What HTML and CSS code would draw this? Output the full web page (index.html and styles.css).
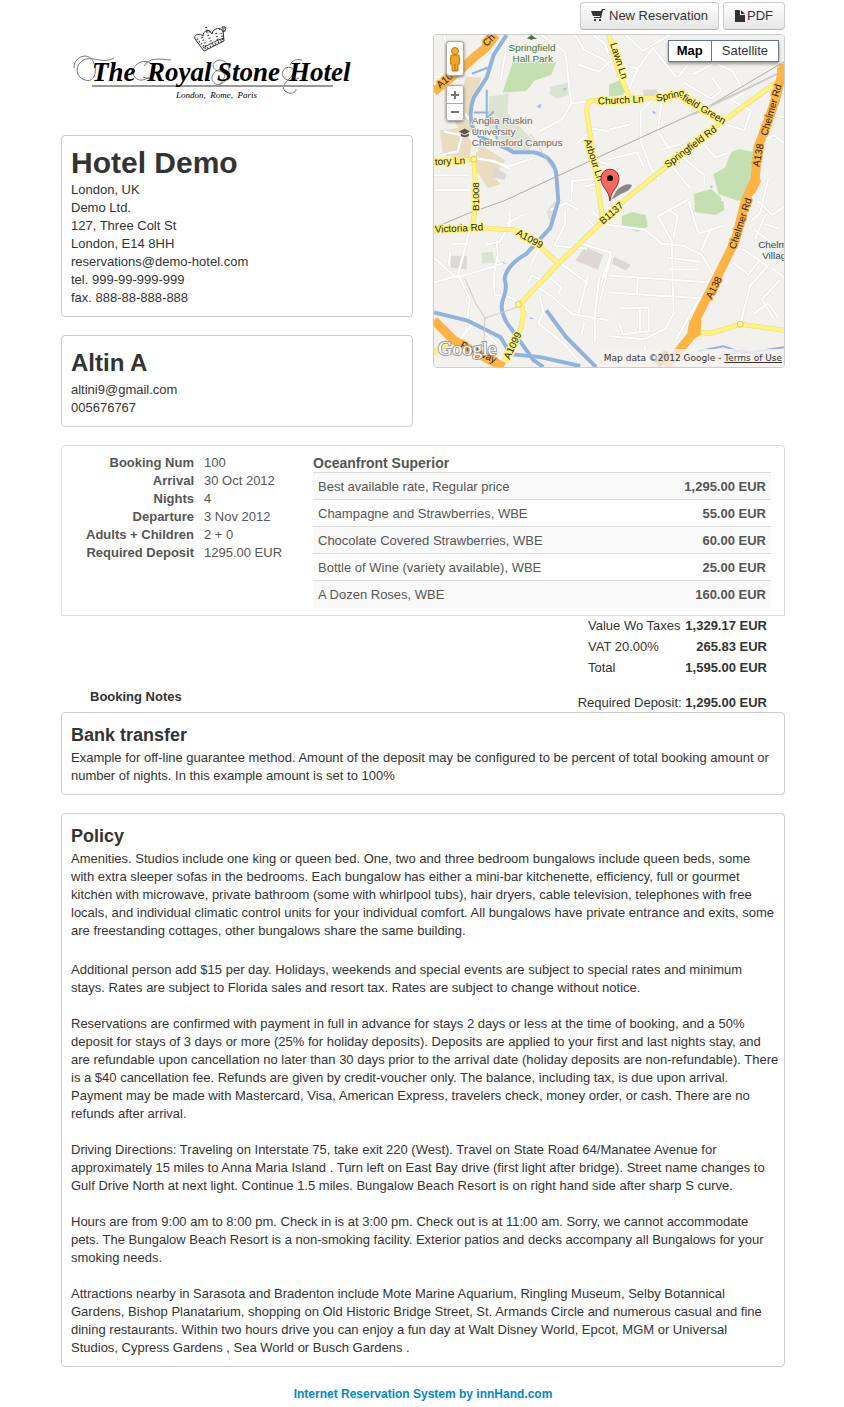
FILE: index.html
```html
<!DOCTYPE html>
<html lang="en">
<head>
<meta charset="utf-8">
<meta name="viewport" content="width=device-width, initial-scale=1">
<title>Hotel Demo - Booking 100</title>
<link rel="stylesheet" href="styles.css">
</head>
<body>
<div class="page">
  <div class="top">
    <div class="col">
      <header class="brand">
        <svg class="logo" viewBox="0 0 300 95" role="img" aria-label="The RoyalStone Hotel - London, Rome, Paris">
          <g fill="none" stroke="#333" stroke-width="1">
            <path d="M134 24l9 12 20-10-1-12M134 24c-2-5 5-6 8-3 0-6 7-7 9-2 1-7 10-7 11-2 4-3 4-6-1-5M146 18c-2-3 4-4 3 0M142 33c6-4 15-8 21-10"/>
            <path stroke-width="2" stroke-dasharray="1 2" d="M136 24l9 10 17-9-2-8M141 22l4 9M147 20l4 9M155 18l2 8M145 12l2 6M158 14l5-2 1 5"/>
          </g>
          <g fill="none" stroke="#777" stroke-width="1">
            <path d="M13 53C13 41 27 37 32 46C38 58 32 68 24 65C13 62 14 47 25 44C34 42 43 49 53 43"/>
            <path d="M88 62C79 69 71 63 72 55C75 45 90 43 93 53C96 61 90 66 82 62M83 51C88 42 99 44 110 45M157 70C163 68 168 53 160 54C149 57 148 67 157 70C171 67 172 45 158 45C149 47 151 57 160 56"/>
            <path d="M238 63C226 69 219 62 222 56C225 50 234 52 233 57C229 66 218 70 224 76C229 80 235 78 235 74M229 50Q232 43 241 45"/>
          </g>
          <path d="M31 71H272" stroke="#999" stroke-width="2"/>
          <g class="logo-name">
            <text x="31" y="66">The</text>
            <text x="86" y="66">Royal</text>
            <text x="156" y="66">Stone</text>
            <text x="228" y="66">Hotel</text>
          </g>
          <text class="logo-cities" x="115" y="83">London,&#160; Rome,&#160; Paris</text>
        </svg>
      </header>
      <section class="card">
        <h1>Hotel Demo</h1>
        <p>London, UK<br>Demo Ltd.<br>127, Three Colt St<br>London, E14 8HH<br>reservations@demo-hotel.com<br>tel. 999-99-999-999<br>fax. 888-88-888-888</p>
      </section>
      <section class="card">
        <h2>Altin A</h2>
        <p>altini9@gmail.com<br>005676767</p>
      </section>
    </div>
    <div class="col">
      <div class="actions">
        <button class="btn" type="button"><svg width="14" height="14" viewBox="0 0 14 14" fill="#333"><path d="M11 0h3v1h-2l-2 8H3V8h6V7H2L0 2h10zM3 10h2v2H3zM8 10h2v2H8z"/></svg>New Reservation</button>
        <button class="btn btn-pdf" type="button"><svg width="10" height="12" viewBox="0 0 10 12" fill="#333"><path d="M0 0h5v5h5v7H0zM6 0l4 4H6z"/></svg>PDF</button>
      </div>
      <div class="map">
        <svg class="map-canvas" viewBox="0 0 352 334" preserveAspectRatio="xMidYMid slice" role="img" aria-label="Map of Springfield Road">
          <rect width="352" height="334" fill="#f3f1ee"/>
          <g fill="#c5dfb0">
            <path d="M80 25L123 27 118 40 101 46 93 56 69 58zM176 50l14-6 5 16-19 2z"/>
            <path d="M300 117l8-2 15 3 4 14-8 29-13 6-20-7-5-20 12-7 4-11zM261 160l18-5 10 9-1 14-24 0z"/>
            <path d="M262 167h29l1 9-9 5-21-3zM189 182l10-4 14 3 2 12-10 5-16-5z"/>
          </g>
          <g fill="#dbe4d3">
            <path d="M55 62l20-3-1 20 28 30-9 9-25-5-13-18zM117 52l18-4 1 12-12 4-8-4z"/>
            <path d="M48 219l11-1 2 11-13 1zM113 178l8-11 5 5-9 16z"/>
          </g>
          <path fill="#e9dcc0" d="M32 42l16 1-12 30 2 23-9 7-8-16zM6 96l21-3 11 15-2 17-27-4zM44 109l28 17-12 17 7 7-13 4-14-21z"/>
          <g fill="#ddd8d3"><path d="M17 222h16v14l-16-2zM152 213l18 8-5 15-23-9zM181 223l17 8-5 6-14-7zM210 55h14l3 8h-15zM61 133l12 7-2 6-12-3z"/></g>
          <defs>
            <path id="minor" d="M0 50L25 33M10 0l6 24 25 1M18 41L0 42M31 79l12 16 0 23M0 141h35M0 156h36M55 126l20 6 25-8M10 97l18 4-4 16-18 4M41 124l20 3 15 8M72 0v18l-5 27M132 17l6 52 15-2M138 69l-9 16-23 12M132 17l-24-17M142 0l9 15 20 10 5 7M176 28l-10 9-20-7M160 0l12 9 4 12M176 12l11 17 18 5 15-21 24 30M193 0l17 16 27-16M205 34l-9 20-8 11M220 65l-12 12 0 30 10 27 8 11M229 67l-4 30 12 18M176 95l21-5M176 125l28-7 7 15M246 42l22-28 18-4M251 48l28 16 10-8-9-12M260 40l22-12 18 8 12 22-14 8M269 107l14 16 12-4M300 66l19 10-7 20-18-6M332 105l10-4 10 8M340 80l12 3M336 145l-8 34-9 8M230 115l18-5 5 9-12 14M249 122l23 19 0 9M238 131l20 23M143 110l17-16 16 3M154 125l22 5M160 145l-21 2-1 20M150 153l20-5M0 224l22 20 15-4 35-11M0 249l24-7 12-46M16 218l-1 14M18 210h16M63 206l1 16-4 20 1 19 16 3 8 5M52 211l14-3 10-17V176M73 190l16-9M24 240l12 26-4 31-11 19M42 286l-17 23M44 292l20 19M106 214l-9 18M128 230l27 20M116 244l12 10-3 6M94 250l4-8 9 4-4 7 17 11 19 17 37 6M106 262l4 16-5 12 25 20 14 16M155 242l-11 43M166 244l-5 45M151 290l-3 13M162 288v21M117 176l16-7 12 7M142 208l36 11-10 32M178 222l-11 46M158 176l12 12M132 176v14l-11 22 33 3M154 185l10 10M176 191l36 5 17 14 22 2 18 9 12 20M225 182l14 25 2 73-8 15-21 11-36-3M226 182l30-17M241 204l4-22-10-7M256 167l10 33 24-8M279 194l-10 22M236 224l31 4M236 236h30M176 242l103 7M176 259l96 6M188 275l28-1v24l-26 3-4-12M207 276v22M205 245l-1 15M267 265l-24 42M338 230l-20 22-10 39M301 229l15 12 12-15M322 196l16 12-5 18M339 234l13 10M310 215l25 17M347 195l-14-5M348 246l-18 20 12 20M322 280l14-10 10 14M212 312v12M326 167l14 14 12-8M333 181l-10 24"/>
            <path id="yellow" d="M348 45L289 88 193 165 167 190 125 230 88 269 90 282 87 296 70 330M170 187L167 167 155 87Q151 65 160 66L176 67 209 63 236 64Q252 54 263 72L289 88M176 0L185 35 196 62M0 197L43 194 80 196 97 204 125 230M0 128L40 125 43 167 38 195M263 299L278 300 308 291 352 297M0 320L18 305"/>
            <path id="orange" d="M0 57L30 32 43 20Q53 14 62 0M0 287L20 307 43 320 70 334M352 30L343 67 326 113 323 145 313 167 303 207 283 247 263 287 259 302 233 334"/>
          </defs>
          <use href="#minor" class="minor-edge"/><use href="#minor" class="minor-road"/>
          <g fill="none" stroke="#8fb3dd" stroke-width="4" stroke-linejoin="round">
            <path d="M73 0L60 20 53 43 40 63Q35 76 38 90Q41 99 47 103L73 114 80 118 100 118Q120 122 123 140L125 167 117 194 93 220Q72 232 71 246Q74 254 70 264Q65 275 73 289L100 327 110 334"/>
            <path d="M0 279l33 8 34 17 10 17 30 3 40 9"/>
            <path d="M113 277l20 27 30 30"/>
            <path stroke-width="2" d="M38 39l16-6M40 78h15M53 55v29l7-7M63 105v-15M266 318l25-5 20 7 41-6M280 326l30-9 42 12"/>
          </g>
          <path fill="#9dc0ea" d="M103 72l5-3-1 5zM129 54l4-1-1 3zM220 76l4 3-4 0zM278 151l3 2-3 1zM69 228l4 2-3 0zM96 284l5 1-4 1z"/>
          <g fill="none" stroke="#aaa" stroke-width="1">
            <path d="M0 194L33 180 70 167 176 118 276 72 352 27"/>
            <path stroke="#ccc" stroke-width="2" d="M260 80L352 36"/>
            <path stroke="#cfcbc4" d="M31 245l11 25 9 14-1 34M51 285l32-11M97 100l22 34"/>
          </g>
          <use href="#yellow" class="yellow-edge"/><use href="#yellow" class="yellow-road"/>
          <circle cx="308" cy="291" r="3" fill="#fff8a0" stroke="#ddc74c"/><circle cx="85" cy="271" r="3" fill="#fff8a0" stroke="#ddc74c"/><circle cx="40" cy="125" r="3" fill="#fff8a0" stroke="#ddc74c"/>
          <use href="#orange" class="orange-edge"/><use href="#orange" class="orange-road"/>
          <path fill="#ffb340" d="M345 33l7-5v20l-7-4zM322 140l7 7-6 12-10 8-4-4 10-9zM257 287h12l-1 15-11 6-3-5z"/>
          <g class="road-labels">
            <text transform="translate(177 9) rotate(72)">Lawn Ln</text>
            <text transform="translate(165 70) rotate(-3)">Church Ln</text>
            <text transform="translate(224 67) rotate(-12)">Spring</text>
            <text transform="translate(249 65) rotate(31)">field Green</text>
            <text transform="translate(235 134) rotate(-37)">Springfield Rd</text>
            <text transform="translate(151 106) rotate(72)">Arbour Ln</text>
            <text transform="translate(1 131) rotate(-3)">tory Ln</text>
            <text transform="translate(45 177) rotate(-90)">B1008</text>
            <text transform="translate(1 199) rotate(-3)">Victoria Rd</text>
            <text transform="translate(82 201) rotate(29)">A1099</text>
            <text transform="translate(76 327) rotate(-65)">A1099</text>
            <text transform="translate(170 191) rotate(-41)">B1137</text>
          </g>
          <g class="road-labels main-road">
            <text transform="translate(6 54) rotate(-40)">A10</text>
            <text transform="translate(53 12) rotate(-46)">Ch</text>
            <text transform="translate(335 102) rotate(-74)">Chelmer Rd</text>
            <text transform="translate(327 133) rotate(-79)">A138</text>
            <text transform="translate(303 216) rotate(-72)">Chelmer Rd</text>
            <text transform="translate(279 266) rotate(-63)">A138</text>
            <text transform="translate(26 314) rotate(25)">Parkway</text>
            <text transform="translate(226 334) rotate(-45)">138</text>
          </g>
          <g class="place-labels">
            <text x="75" y="16">Springfield</text><text x="79" y="27">Hall Park</text>
            <g class="campus"><text x="38" y="90">Anglia Ruskin</text><text x="38" y="101">University</text><text x="38" y="112">Chelmsford Campus</text></g>
            <g class="village"><text x="326" y="214">Chelm</text><text x="330" y="225">Villag</text></g>
          </g>
          <path fill="#49733f" d="M98 0l4 3H94zM94 3h9v1h-4v1h-2V4h-3z"/>
          <path fill="#5f5548" d="M25 97l6-3 5 3-5 3zM27 99l4 2 4-2v3l-4 1-4-1z"/>
          <path d="M178 166l6-10q9-8 15-5 0 5-11 9z" fill="#333" opacity=".55"/>
          <path d="M177 167c-1-12-9-13-9-23a9 9 0 0 1 18 0c0 10-8 11-9 23z" fill="#f9685e" stroke="#8d302b"/><circle cx="177" cy="144" r="3"/>
          <text class="google" x="4" y="322">Google</text>
        </svg>
        <div class="map-zoom">
          <button class="pegman" type="button" aria-label="Street view"><svg width="10" height="26" viewBox="0 0 10 26"><path d="M1 9h8l1 9H8v7H2v-7H0z" fill="#f5a321" stroke="#bd7410"/><circle cx="5" cy="5" r="3.500" fill="#f7ae2c" stroke="#bd7410"/><path d="M5 18v7" stroke="#bd7410"/></svg></button>
          <div class="zoom-pair"><button type="button" aria-label="Zoom in"><svg width="8" height="8" viewBox="0 0 8 8"><path d="M0 4h8M4 0v8" stroke="#777" stroke-width="2"/></svg></button><button type="button" aria-label="Zoom out"><svg width="8" height="8" viewBox="0 0 8 8"><path d="M0 4h8" stroke="#777" stroke-width="2"/></svg></button></div>
        </div>
        <div class="map-type"><button class="active" type="button">Map</button><button type="button">Satellite</button></div>
        <div class="map-credit">Map data ©2012 Google - <a href="#terms">Terms of Use</a></div>
      </div>
    </div>
  </div>

  <section class="booking">
    <dl>
      <dt>Booking Num</dt><dd>100</dd>
      <dt>Arrival</dt><dd>30 Oct 2012</dd>
      <dt>Nights</dt><dd>4</dd>
      <dt>Departure</dt><dd>3 Nov 2012</dd>
      <dt>Adults + Children</dt><dd>2 + 0</dd>
      <dt>Required Deposit</dt><dd>1295.00 EUR</dd>
    </dl>
    <table class="items">
      <caption>Oceanfront Superior</caption>
      <tbody>
        <tr><td>Best available rate, Regular price</td><td>1,295.00 EUR</td></tr>
        <tr><td>Champagne and Strawberries, WBE</td><td>55.00 EUR</td></tr>
        <tr><td>Chocolate Covered Strawberries, WBE</td><td>60.00 EUR</td></tr>
        <tr><td>Bottle of Wine (variety available), WBE</td><td>25.00 EUR</td></tr>
        <tr><td>A Dozen Roses, WBE</td><td>160.00 EUR</td></tr>
      </tbody>
    </table>
  </section>

  <section class="summary">
    <h4>Booking Notes</h4>
    <div class="sums">
      <table>
        <tbody>
          <tr><td>Value Wo Taxes</td><td>1,329.17 EUR</td></tr>
          <tr><td>VAT 20.00%</td><td>265.83 EUR</td></tr>
          <tr><td>Total</td><td>1,595.00 EUR</td></tr>
        </tbody>
      </table>
      <p>Required Deposit: <strong>1,295.00 EUR</strong></p>
    </div>
  </section>

  <section class="card">
    <h3>Bank transfer</h3>
    <p>Example for off-line guarantee method. Amount of the deposit may be configured to be percent of total booking amount or number of nights. In this example amount is set to 100%</p>
  </section>

  <section class="card policy">
    <h3>Policy</h3>
    <p>Amenities. Studios include one king or queen bed. One, two and three bedroom bungalows include queen beds, some<br>with extra sleeper sofas in the bedrooms. Each bungalow has either a mini-bar kitchenette, efficiency, full or gourmet<br>kitchen with microwave, private bathroom (some with whirlpool tubs), hair dryers, cable television, telephones with free<br>locals, and individual climatic control units for your individual comfort. All bungalows have private entrance and exits, some<br>are freestanding cottages, other bungalows share the same building.</p>
    <p>Additional person add $15 per day. Holidays, weekends and special events are subject to special rates and minimum<br>stays. Rates are subject to Florida sales and resort tax. Rates are subject to change without notice.</p>
    <p>Reservations are confirmed with payment in full in advance for stays 2 days or less at the time of booking, and a 50%<br>deposit for stays of 3 days or more (25% for holiday deposits). Deposits are applied to your first and last nights stay, and<br>are refundable upon cancellation no later than 30 days prior to the arrival date (holiday deposits are non-refundable). There<br>is a $40 cancellation fee. Refunds are given by credit-voucher only. The balance, including tax, is due upon arrival.<br>Payment may be made with Mastercard, Visa, American Express, travelers check, money order, or cash. There are no<br>refunds after arrival.</p>
    <p>Driving Directions: Traveling on Interstate 75, take exit 220 (West). Travel on State Road 64/Manatee Avenue for<br>approximately 15 miles to Anna Maria Island . Turn left on East Bay drive (first light after bridge). Street name changes to<br>Gulf Drive North at next light. Continue 1.5 miles. Bungalow Beach Resort is on right hand side after sharp S curve.</p>
    <p>Hours are from 9:00 am to 8:00 pm. Check in is at 3:00 pm. Check out is at 11:00 am. Sorry, we cannot accommodate<br>pets. The Bungalow Beach Resort is a non-smoking facility. Exterior patios and decks accompany all Bungalows for your<br>smoking needs.</p>
    <p>Attractions nearby in Sarasota and Bradenton include Mote Marine Aquarium, Ringling Museum, Selby Botannical<br>Gardens, Bishop Planatarium, shopping on Old Historic Bridge Street, St. Armands Circle and numerous casual and fine<br>dining restaurants. Within two hours drive you can enjoy a fun day at Walt Disney World, Epcot, MGM or Universal<br>Studios, Cypress Gardens , Sea World or Busch Gardens .</p>
  </section>

  <footer><a href="#innhand">Internet Reservation System by innHand.com</a></footer>
</div>
</body>
</html>
```
FILE: styles.css
```css
* { box-sizing: border-box; }
body {
  margin: 0;
  background: #fff;
  color: #333;
  font: 13px/18px "Liberation Sans", Arial, sans-serif;
}
button { font: inherit; color: inherit; cursor: pointer; }
h1, h2, h3, h4, p, dl, dd { margin: 0; }
.page { max-width: 764px; margin: 0 auto; padding: 2px 19px 0 21px; }

/* Top area */
.top { display: grid; grid-template-columns: 1fr 1fr; gap: 20px; }
.brand { height: 133px; padding-top: 13px; }
.logo { display: block; width: 300px; max-width: 100%; height: 95px; }
.logo-name { font: italic bold 27px "Liberation Serif", serif; fill: #000; }
.logo-cities { font: italic 9px "Liberation Serif", serif; fill: #000; }

.card {
  margin-bottom: 18px;
  padding: 9px;
  border: 1px solid #ccc;
  border-radius: 4px;
}
h1 { font-size: 30px; line-height: 36px; }
h2 { font-size: 24px; line-height: 36px; }
h3 { font-size: 18px; line-height: 27px; }

.actions { display: flex; justify-content: flex-end; gap: 4px; margin-bottom: 4px; }
.btn {
  display: flex;
  align-items: center;
  gap: 4px;
  height: 28px;
  padding: 0 10px;
  border: 1px solid #ccc;
  border-bottom-color: #b3b3b3;
  border-radius: 4px;
  background: linear-gradient(#fff, #e6e6e6);
}
.btn-pdf { gap: 2px; padding: 0 11px; }

/* Map */
.map {
  position: relative;
  height: 334px;
  border: 1px solid #ccc;
  border-radius: 4px;
  overflow: hidden;
}
.map-canvas { display: block; width: 100%; height: 100%; font: 10px "Liberation Sans", Arial, sans-serif; }
.map-canvas use { fill: none; stroke-linejoin: round; }
.minor-edge { stroke: #e2e1df; stroke-width: 3px; }
.minor-road { stroke: #fff; stroke-width: 2px; }
.yellow-edge { stroke: #e4d98c; stroke-width: 5px; }
.yellow-road { stroke: #fff37a; stroke-width: 4px; }
.orange-edge { stroke: #eeb064; stroke-width: 9px; }
.orange-road { stroke: #ffb340; stroke-width: 8px; }
.road-labels text { fill: #222; stroke: #fff37a; stroke-width: 3px; paint-order: stroke; stroke-linejoin: round; }
.main-road text { stroke: #ffb340; }
.place-labels text { fill: #49733f; stroke: #f3f1ee; stroke-width: 2px; paint-order: stroke; }
.place-labels .campus text { fill: #6d6357; }
.place-labels .village text { fill: #444; }
.google { font: 20px "Liberation Serif", serif; fill: #fff; stroke: #999; stroke-width: 2px; paint-order: stroke; }
.map-zoom { position: absolute; top: 6px; left: 12px; width: 18px; }
.map-zoom button { display: grid; place-items: center; width: 100%; height: 17px; padding: 0; border: 0; background: #fff; }
.map-zoom .pegman { height: 35px; border: 1px solid #aaa; border-radius: 3px; box-shadow: 0 1px 3px #777; }
.zoom-pair { margin-top: 9px; border: 1px solid #aaa; border-radius: 3px; box-shadow: 0 1px 3px #777; overflow: hidden; }
.zoom-pair button + button { border-top: 1px solid #aaa; }
.map-type { position: absolute; top: 5px; right: 5px; display: flex; box-shadow: 0 2px 3px #999; }
.map-type button { height: 22px; padding: 0 10px; border: 1px solid #678; background: #fff; }
.map-type .active { padding: 0 8px; border-right: 0; color: #000; font-weight: bold; }
.map-credit {
  position: absolute;
  right: 0;
  bottom: 0;
  padding: 0 2px 0 4px;
  background: rgba(245, 243, 240, .8);
  color: #333;
  font: 9px/18px "DejaVu Sans", sans-serif;
  white-space: nowrap;
}
.map-credit a { color: inherit; }

/* Booking */
.booking {
  display: grid;
  grid-template-columns: 251px 1fr;
  padding: 8px 13px 7px 0;
  border: 1px solid #ddd;
  border-radius: 4px 4px 0 0;
  color: #555;
}
dl { display: grid; grid-template-columns: 132px 1fr; grid-auto-rows: 18px; align-content: start; column-gap: 10px; }
dt { text-align: right; font-weight: bold; }
table { border-collapse: collapse; border-spacing: 0; }
td { padding: 0; }
td:last-child { text-align: right; font-weight: bold; }
.items { width: 100%; }
.items caption { text-align: left; font-size: 14px; font-weight: bold; }
.items td { height: 27px; padding: 1px 5px 0; border-top: 1px solid #ddd; }
.items tr:nth-child(odd) { background: #f9f9f9; }

.summary { display: flex; justify-content: space-between; align-items: flex-end; padding: 0 18px 0 29px; }
.summary h4 { padding-bottom: 6px; font-size: 13px; line-height: 18px; }
.sums table { width: 179px; margin-left: auto; }
.sums td { height: 21px; white-space: nowrap; }
.sums p { padding-top: 15px; text-align: right; }

.policy { padding-right: 3px; }
.policy p + p { margin-top: 18px; }
.policy h3 + p { margin-bottom: 21px; }

footer { text-align: center; font-size: 12px; font-weight: bold; }
footer a { color: #08c; text-decoration: none; }
```
